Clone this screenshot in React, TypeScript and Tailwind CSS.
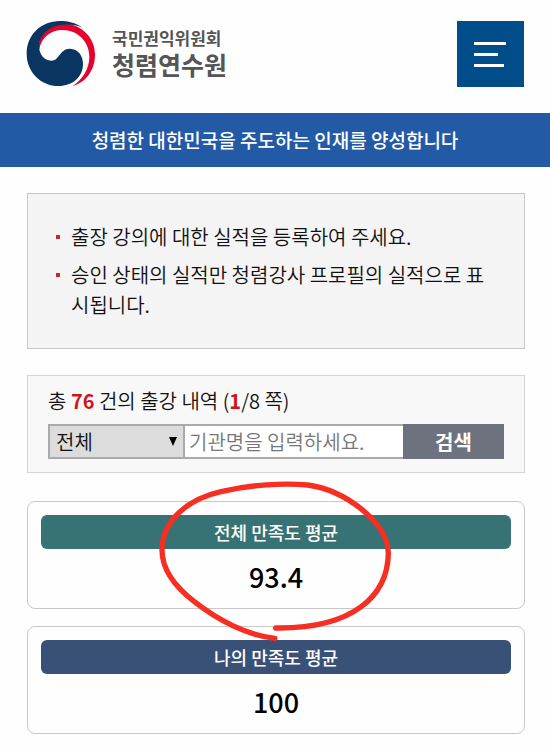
import type { ReactNode } from 'react';

const notices = [
  '출장 강의에 대한 실적을 등록하여 주세요.',
  '승인 상태의 실적만 청렴강사 프로필의 실적으로 표시됩니다.',
];

const Emblem = () => (
  <svg className="h-20 w-20 shrink-0" viewBox="0 0 240 240" aria-hidden="true">
    <path
      fill="#e4032e"
      d="M56 112 C54 66 88 34 132 34 C186 38 225 78 225 128 C225 174 198 210 158 222 C190 200 208 168 208 134 C208 88 172 54 128 54 C92 54 64 76 58 112 Z"
    />
    <path
      fill="#0a3561"
      d="M188 47 C166 32 144 27 120 27 C62 27 20 70 20 125 C20 180 62 222 116 222 C158 222 189 194 189 156 C189 130 174 111 150 110 C120 109 118 146 94 146 C72 146 58 128 57 103 C58 66 92 39 132 38 C153 37 172 40 188 47 Z"
    />
  </svg>
);

const Header = () => (
  <header className="flex h-[113px] items-start justify-between pr-[26px] pl-5">
    <a href="#" className="flex items-center gap-3 pt-3 text-[#555]">
      <Emblem />
      <span className="flex flex-col font-bold">
        <span className="text-[17px] leading-6">국민권익위원회</span>
        <span className="text-[25px] leading-7">청렴연수원</span>
      </span>
    </a>
    <button
      type="button"
      aria-label="메뉴"
      className="mt-[21px] flex h-[66px] w-[67px] flex-col justify-center gap-2 bg-[#004d89] pl-[17px]"
    >
      <span className="h-[3px] w-8 bg-white" />
      <span className="h-[3px] w-6 bg-white" />
      <span className="h-[3px] w-[30px] bg-white" />
    </button>
  </header>
);

const SearchBox = () => (
  <form className="border border-[#d5d5d5] bg-[#f8f8f8] px-5 pt-[10px] pb-[13px]">
    <p className="mb-2 leading-[30px]">
      총 <strong className="font-bold text-[#d0141b]">76</strong> 건의 출강 내역 (
      <strong className="font-bold text-[#d0141b]">1</strong>/8 쪽)
    </p>
    <div className="flex h-[35px]">
      <div className="relative w-[137px] shrink-0">
        <select
          aria-label="검색 구분"
          className="h-full w-full appearance-none border-2 border-[#aaa] bg-[#dcdcdc] pl-[6px] text-[#111]"
        >
          <option>전체</option>
        </select>
        <svg
          className="pointer-events-none absolute top-[13px] right-2 h-[9px] w-2"
          viewBox="0 0 8 9"
          aria-hidden="true"
        >
          <path d="M0 0h8L4 9z" />
        </svg>
      </div>
      <input
        type="text"
        aria-label="기관명"
        placeholder="기관명을 입력하세요."
        className="min-w-0 flex-1 border-y-2 border-[#aaa] bg-white pl-1 placeholder:text-[#777]"
      />
      <button type="submit" className="w-[101px] shrink-0 bg-[#6e727e] font-bold text-white">
        검색
      </button>
    </div>
  </form>
);

type ScoreCardProps = {
  title: string;
  score: string;
  titleClass: string;
  children?: ReactNode;
};

const ScoreCard = ({ title, score, titleClass, children }: ScoreCardProps) => (
  <section className="relative rounded-lg border border-[#c8c8c8] p-[13px] pb-[3px] text-center">
    <h2 className={`rounded-md text-lg leading-[34px] font-medium text-white ${titleClass}`}>
      {title}
    </h2>
    <p className="text-[27px] leading-[56px] font-medium text-black">{score}</p>
    {children}
  </section>
);

const PenCircle = () => (
  <svg
    className="pointer-events-none absolute -top-[27px] left-1/2 z-10 h-[170px] w-[250px] -translate-x-1/2"
    viewBox="0 0 750 510"
    fill="none"
    stroke="#f52f22"
    strokeWidth="16"
    strokeLinecap="round"
    aria-hidden="true"
  >
    <path d="M372 490 C290 482 200 435 130 380 C65 330 33 280 33 225 C33 130 120 70 210 50 C300 28 400 24 470 30 C580 45 710 140 712 235 C710 360 610 462 374 459" />
  </svg>
);

const App = () => {
  return (
    <div className="bg-[#fefefe] font-['Noto_Sans_CJK_KR',sans-serif] text-xl font-[350] text-[#111]">
      <Header />
      <p className="bg-[#225aa5] text-center text-[19px] leading-[54px] font-medium text-white">
        청렴한 대한민국을 주도하는 인재를 양성합니다
      </p>
      <main className="flex flex-col pt-[26px] pr-[25px] pb-3 pl-[27px]">
        <ul className="mb-[26px] flex flex-col gap-2 border border-[#c8c8c8] bg-[#f4f4f4] px-7 py-7 leading-[30px]">
          {notices.map((notice) => (
            <li key={notice} className="flex gap-[11px]">
              <span className="mt-[13px] h-1 w-1 shrink-0 bg-[#c4282d]" />
              <span>{notice}</span>
            </li>
          ))}
        </ul>
        <SearchBox />
        <div className="mt-7 flex flex-col gap-[17px]">
          <ScoreCard title="전체 만족도 평균" score="93.4" titleClass="bg-[#377274]">
            <PenCircle />
          </ScoreCard>
          <ScoreCard title="나의 만족도 평균" score="100" titleClass="bg-[#395077]" />
        </div>
      </main>
    </div>
  );
};

export default App;
